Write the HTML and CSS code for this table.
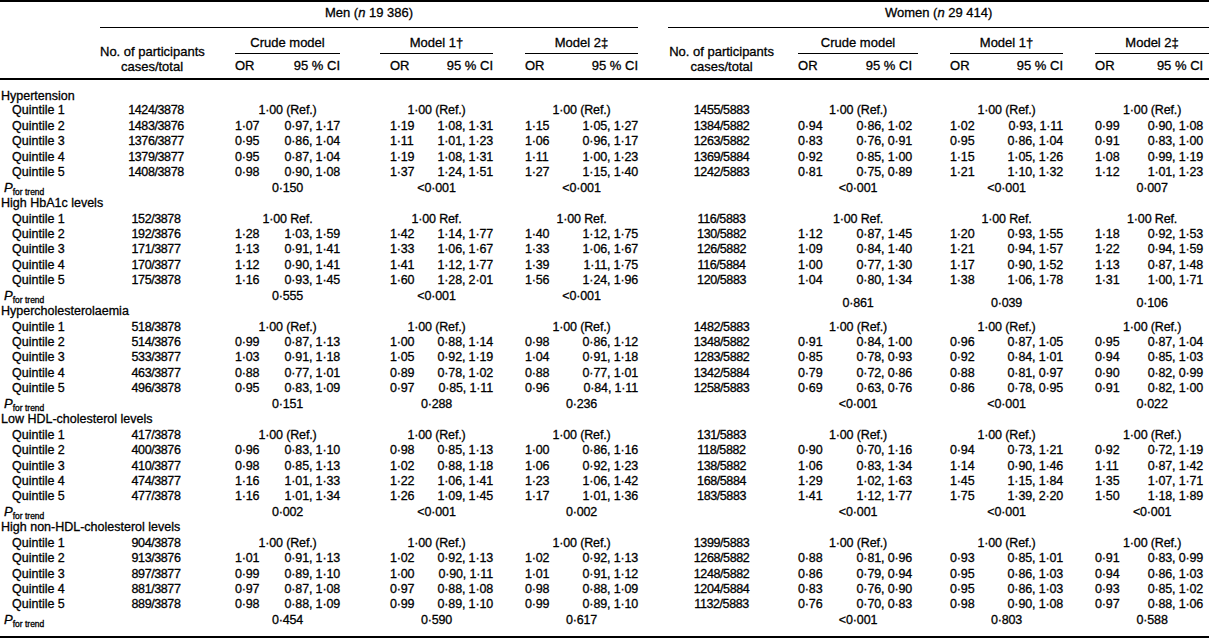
FILE: index.html
```html
<!DOCTYPE html>
<html lang="en">
<head>
<meta charset="utf-8">
<title>Table</title>
<link rel="stylesheet" href="styles.css">
</head>
<body>
<div class="wrap">
<table class="tbl">
<colgroup>
<col class="w100"><col class="w112"><col class="w23"><col class="w40"><col class="w65"><col class="w40"><col class="w40"><col class="w73"><col class="w32"><col class="w40"><col class="w73"><col class="w30"><col class="w107"><col class="w23"><col class="w40"><col class="w80"><col class="w32"><col class="w40"><col class="w73"><col class="w32"><col class="w40"><col class="w74">
</colgroup>
<thead>
<tr class="r1">
<th rowspan="3"></th>
<th class="grp" colspan="10">Men (<i>n</i> 19 386)</th>
<th></th>
<th class="grp" colspan="10">Women (<i>n</i> 29 414)</th>
</tr>
<tr class="r2">
<th class="part part-m" rowspan="2">No. of participants<br>cases/total</th>
<th rowspan="2"></th>
<th class="grp" colspan="2">Crude model</th>
<th></th>
<th class="grp" colspan="2">Model 1†</th>
<th></th>
<th class="grp" colspan="2">Model 2‡</th>
<th></th>
<th class="part" rowspan="2">No. of participants<br>cases/total</th>
<th rowspan="2"></th>
<th class="grp" colspan="2">Crude model</th>
<th></th>
<th class="grp" colspan="2">Model 1†</th>
<th></th>
<th class="grp" colspan="2">Model 2‡</th>
</tr>
<tr class="r3">
<th class="or">OR</th><th class="ci">95 % CI</th><th></th>
<th class="or">OR</th><th class="ci">95 % CI</th><th></th>
<th class="or">OR</th><th class="ci">95 % CI</th><th></th>
<th class="or">OR</th><th class="ci">95 % CI</th><th></th>
<th class="or">OR</th><th class="ci">95 % CI</th><th></th>
<th class="or">OR</th><th class="ci">95 % CI</th>
</tr>
</thead>
<tbody>
<tr class="sec first"><td colspan="22">Hypertension</td></tr>
<tr><td class="q">Quintile 1</td><td class="n">1424/3878</td><td></td><td class="c" colspan="2">1·00 (Ref.)</td><td></td><td class="c" colspan="2">1·00 (Ref.)</td><td></td><td class="c" colspan="2">1·00 (Ref.)</td><td></td><td class="n">1455/5883</td><td></td><td class="c" colspan="2">1·00 (Ref.)</td><td></td><td class="c" colspan="2">1·00 (Ref.)</td><td></td><td class="c" colspan="2">1·00 (Ref.)</td></tr>
<tr><td class="q">Quintile 2</td><td class="n">1483/3876</td><td></td><td class="or">1·07</td><td class="ci">0·97, 1·17</td><td></td><td class="or">1·19</td><td class="ci">1·08, 1·31</td><td></td><td class="or">1·15</td><td class="ci">1·05, 1·27</td><td></td><td class="n">1384/5882</td><td></td><td class="or">0·94</td><td class="ci">0·86, 1·02</td><td></td><td class="or">1·02</td><td class="ci">0·93, 1·11</td><td></td><td class="or">0·99</td><td class="ci">0·90, 1·08</td></tr>
<tr><td class="q">Quintile 3</td><td class="n">1376/3877</td><td></td><td class="or">0·95</td><td class="ci">0·86, 1·04</td><td></td><td class="or">1·11</td><td class="ci">1·01, 1·23</td><td></td><td class="or">1·06</td><td class="ci">0·96, 1·17</td><td></td><td class="n">1263/5882</td><td></td><td class="or">0·83</td><td class="ci">0·76, 0·91</td><td></td><td class="or">0·95</td><td class="ci">0·86, 1·04</td><td></td><td class="or">0·91</td><td class="ci">0·83, 1·00</td></tr>
<tr><td class="q">Quintile 4</td><td class="n">1379/3877</td><td></td><td class="or">0·95</td><td class="ci">0·87, 1·04</td><td></td><td class="or">1·19</td><td class="ci">1·08, 1·31</td><td></td><td class="or">1·11</td><td class="ci">1·00, 1·23</td><td></td><td class="n">1369/5884</td><td></td><td class="or">0·92</td><td class="ci">0·85, 1·00</td><td></td><td class="or">1·15</td><td class="ci">1·05, 1·26</td><td></td><td class="or">1·08</td><td class="ci">0·99, 1·19</td></tr>
<tr><td class="q">Quintile 5</td><td class="n">1408/3878</td><td></td><td class="or">0·98</td><td class="ci">0·90, 1·08</td><td></td><td class="or">1·37</td><td class="ci">1·24, 1·51</td><td></td><td class="or">1·27</td><td class="ci">1·15, 1·40</td><td></td><td class="n">1242/5883</td><td></td><td class="or">0·81</td><td class="ci">0·75, 0·89</td><td></td><td class="or">1·21</td><td class="ci">1·10, 1·32</td><td></td><td class="or">1·12</td><td class="ci">1·01, 1·23</td></tr>
<tr><td class="p"><i>P</i><sub>for trend</sub></td><td></td><td></td><td class="c" colspan="2">0·150</td><td></td><td class="c" colspan="2">&lt;0·001</td><td></td><td class="c" colspan="2">&lt;0·001</td><td></td><td></td><td></td><td class="c" colspan="2">&lt;0·001</td><td></td><td class="c" colspan="2">&lt;0·001</td><td></td><td class="c" colspan="2">0·007</td></tr>

<tr class="sec"><td colspan="22">High HbA1c levels</td></tr>
<tr><td class="q">Quintile 1</td><td class="n">152/3878</td><td></td><td class="c" colspan="2">1·00 Ref.</td><td></td><td class="c" colspan="2">1·00 Ref.</td><td></td><td class="c" colspan="2">1·00 Ref.</td><td></td><td class="n">116/5883</td><td></td><td class="c" colspan="2">1·00 Ref.</td><td></td><td class="c" colspan="2">1·00 Ref.</td><td></td><td class="c" colspan="2">1·00 Ref.</td></tr>
<tr><td class="q">Quintile 2</td><td class="n">192/3876</td><td></td><td class="or">1·28</td><td class="ci">1·03, 1·59</td><td></td><td class="or">1·42</td><td class="ci">1·14, 1·77</td><td></td><td class="or">1·40</td><td class="ci">1·12, 1·75</td><td></td><td class="n">130/5882</td><td></td><td class="or">1·12</td><td class="ci">0·87, 1·45</td><td></td><td class="or">1·20</td><td class="ci">0·93, 1·55</td><td></td><td class="or">1·18</td><td class="ci">0·92, 1·53</td></tr>
<tr><td class="q">Quintile 3</td><td class="n">171/3877</td><td></td><td class="or">1·13</td><td class="ci">0·91, 1·41</td><td></td><td class="or">1·33</td><td class="ci">1·06, 1·67</td><td></td><td class="or">1·33</td><td class="ci">1·06, 1·67</td><td></td><td class="n">126/5882</td><td></td><td class="or">1·09</td><td class="ci">0·84, 1·40</td><td></td><td class="or">1·21</td><td class="ci">0·94, 1·57</td><td></td><td class="or">1·22</td><td class="ci">0·94, 1·59</td></tr>
<tr><td class="q">Quintile 4</td><td class="n">170/3877</td><td></td><td class="or">1·12</td><td class="ci">0·90, 1·41</td><td></td><td class="or">1·41</td><td class="ci">1·12, 1·77</td><td></td><td class="or">1·39</td><td class="ci">1·11, 1·75</td><td></td><td class="n">116/5884</td><td></td><td class="or">1·00</td><td class="ci">0·77, 1·30</td><td></td><td class="or">1·17</td><td class="ci">0·90, 1·52</td><td></td><td class="or">1·13</td><td class="ci">0·87, 1·48</td></tr>
<tr><td class="q">Quintile 5</td><td class="n">175/3878</td><td></td><td class="or">1·16</td><td class="ci">0·93, 1·45</td><td></td><td class="or">1·60</td><td class="ci">1·28, 2·01</td><td></td><td class="or">1·56</td><td class="ci">1·24, 1·96</td><td></td><td class="n">120/5883</td><td></td><td class="or">1·04</td><td class="ci">0·80, 1·34</td><td></td><td class="or">1·38</td><td class="ci">1·06, 1·78</td><td></td><td class="or">1·31</td><td class="ci">1·00, 1·71</td></tr>
<tr><td class="p"><i>P</i><sub>for trend</sub></td><td></td><td></td><td class="c" colspan="2">0·555</td><td></td><td class="c" colspan="2">&lt;0·001</td><td></td><td class="c" colspan="2">&lt;0·001</td><td></td><td></td><td></td><td class="c" colspan="2"><span class="low">0·861</span></td><td></td><td class="c" colspan="2"><span class="low">0·039</span></td><td></td><td class="c" colspan="2"><span class="low">0·106</span></td></tr>

<tr class="sec"><td colspan="22">Hypercholesterolaemia</td></tr>
<tr><td class="q">Quintile 1</td><td class="n">518/3878</td><td></td><td class="c" colspan="2">1·00 (Ref.)</td><td></td><td class="c" colspan="2">1·00 (Ref.)</td><td></td><td class="c" colspan="2">1·00 (Ref.)</td><td></td><td class="n">1482/5883</td><td></td><td class="c" colspan="2">1·00 (Ref.)</td><td></td><td class="c" colspan="2">1·00 (Ref.)</td><td></td><td class="c" colspan="2">1·00 (Ref.)</td></tr>
<tr><td class="q">Quintile 2</td><td class="n">514/3876</td><td></td><td class="or">0·99</td><td class="ci">0·87, 1·13</td><td></td><td class="or">1·00</td><td class="ci">0·88, 1·14</td><td></td><td class="or">0·98</td><td class="ci">0·86, 1·12</td><td></td><td class="n">1348/5882</td><td></td><td class="or">0·91</td><td class="ci">0·84, 1·00</td><td></td><td class="or">0·96</td><td class="ci">0·87, 1·05</td><td></td><td class="or">0·95</td><td class="ci">0·87, 1·04</td></tr>
<tr><td class="q">Quintile 3</td><td class="n">533/3877</td><td></td><td class="or">1·03</td><td class="ci">0·91, 1·18</td><td></td><td class="or">1·05</td><td class="ci">0·92, 1·19</td><td></td><td class="or">1·04</td><td class="ci">0·91, 1·18</td><td></td><td class="n">1283/5882</td><td></td><td class="or">0·85</td><td class="ci">0·78, 0·93</td><td></td><td class="or">0·92</td><td class="ci">0·84, 1·01</td><td></td><td class="or">0·94</td><td class="ci">0·85, 1·03</td></tr>
<tr><td class="q">Quintile 4</td><td class="n">463/3877</td><td></td><td class="or">0·88</td><td class="ci">0·77, 1·01</td><td></td><td class="or">0·89</td><td class="ci">0·78, 1·02</td><td></td><td class="or">0·88</td><td class="ci">0·77, 1·01</td><td></td><td class="n">1342/5884</td><td></td><td class="or">0·79</td><td class="ci">0·72, 0·86</td><td></td><td class="or">0·88</td><td class="ci">0·81, 0·97</td><td></td><td class="or">0·90</td><td class="ci">0·82, 0·99</td></tr>
<tr><td class="q">Quintile 5</td><td class="n">496/3878</td><td></td><td class="or">0·95</td><td class="ci">0·83, 1·09</td><td></td><td class="or">0·97</td><td class="ci">0·85, 1·11</td><td></td><td class="or">0·96</td><td class="ci">0·84, 1·11</td><td></td><td class="n">1258/5883</td><td></td><td class="or">0·69</td><td class="ci">0·63, 0·76</td><td></td><td class="or">0·86</td><td class="ci">0·78, 0·95</td><td></td><td class="or">0·91</td><td class="ci">0·82, 1·00</td></tr>
<tr><td class="p"><i>P</i><sub>for trend</sub></td><td></td><td></td><td class="c" colspan="2">0·151</td><td></td><td class="c" colspan="2">0·288</td><td></td><td class="c" colspan="2">0·236</td><td></td><td></td><td></td><td class="c" colspan="2">&lt;0·001</td><td></td><td class="c" colspan="2">&lt;0·001</td><td></td><td class="c" colspan="2">0·022</td></tr>

<tr class="sec"><td colspan="22">Low HDL-cholesterol levels</td></tr>
<tr><td class="q">Quintile 1</td><td class="n">417/3878</td><td></td><td class="c" colspan="2">1·00 (Ref.)</td><td></td><td class="c" colspan="2">1·00 (Ref.)</td><td></td><td class="c" colspan="2">1·00 (Ref.)</td><td></td><td class="n">131/5883</td><td></td><td class="c" colspan="2">1·00 (Ref.)</td><td></td><td class="c" colspan="2">1·00 (Ref.)</td><td></td><td class="c" colspan="2">1·00 (Ref.)</td></tr>
<tr><td class="q">Quintile 2</td><td class="n">400/3876</td><td></td><td class="or">0·96</td><td class="ci">0·83, 1·10</td><td></td><td class="or">0·98</td><td class="ci">0·85, 1·13</td><td></td><td class="or">1·00</td><td class="ci">0·86, 1·16</td><td></td><td class="n">118/5882</td><td></td><td class="or">0·90</td><td class="ci">0·70, 1·16</td><td></td><td class="or">0·94</td><td class="ci">0·73, 1·21</td><td></td><td class="or">0·92</td><td class="ci">0·72, 1·19</td></tr>
<tr><td class="q">Quintile 3</td><td class="n">410/3877</td><td></td><td class="or">0·98</td><td class="ci">0·85, 1·13</td><td></td><td class="or">1·02</td><td class="ci">0·88, 1·18</td><td></td><td class="or">1·06</td><td class="ci">0·92, 1·23</td><td></td><td class="n">138/5882</td><td></td><td class="or">1·06</td><td class="ci">0·83, 1·34</td><td></td><td class="or">1·14</td><td class="ci">0·90, 1·46</td><td></td><td class="or">1·11</td><td class="ci">0·87, 1·42</td></tr>
<tr><td class="q">Quintile 4</td><td class="n">474/3877</td><td></td><td class="or">1·16</td><td class="ci">1·01, 1·33</td><td></td><td class="or">1·22</td><td class="ci">1·06, 1·41</td><td></td><td class="or">1·23</td><td class="ci">1·06, 1·42</td><td></td><td class="n">168/5884</td><td></td><td class="or">1·29</td><td class="ci">1·02, 1·63</td><td></td><td class="or">1·45</td><td class="ci">1·15, 1·84</td><td></td><td class="or">1·35</td><td class="ci">1·07, 1·71</td></tr>
<tr><td class="q">Quintile 5</td><td class="n">477/3878</td><td></td><td class="or">1·16</td><td class="ci">1·01, 1·34</td><td></td><td class="or">1·26</td><td class="ci">1·09, 1·45</td><td></td><td class="or">1·17</td><td class="ci">1·01, 1·36</td><td></td><td class="n">183/5883</td><td></td><td class="or">1·41</td><td class="ci">1·12, 1·77</td><td></td><td class="or">1·75</td><td class="ci">1·39, 2·20</td><td></td><td class="or">1·50</td><td class="ci">1·18, 1·89</td></tr>
<tr><td class="p"><i>P</i><sub>for trend</sub></td><td></td><td></td><td class="c" colspan="2">0·002</td><td></td><td class="c" colspan="2">&lt;0·001</td><td></td><td class="c" colspan="2">0·002</td><td></td><td></td><td></td><td class="c" colspan="2">&lt;0·001</td><td></td><td class="c" colspan="2">&lt;0·001</td><td></td><td class="c" colspan="2">&lt;0·001</td></tr>

<tr class="sec"><td colspan="22">High non-HDL-cholesterol levels</td></tr>
<tr><td class="q">Quintile 1</td><td class="n">904/3878</td><td></td><td class="c" colspan="2">1·00 (Ref.)</td><td></td><td class="c" colspan="2">1·00 (Ref.)</td><td></td><td class="c" colspan="2">1·00 (Ref.)</td><td></td><td class="n">1399/5883</td><td></td><td class="c" colspan="2">1·00 (Ref.)</td><td></td><td class="c" colspan="2">1·00 (Ref.)</td><td></td><td class="c" colspan="2">1·00 (Ref.)</td></tr>
<tr><td class="q">Quintile 2</td><td class="n">913/3876</td><td></td><td class="or">1·01</td><td class="ci">0·91, 1·13</td><td></td><td class="or">1·02</td><td class="ci">0·92, 1·13</td><td></td><td class="or">1·02</td><td class="ci">0·92, 1·13</td><td></td><td class="n">1268/5882</td><td></td><td class="or">0·88</td><td class="ci">0·81, 0·96</td><td></td><td class="or">0·93</td><td class="ci">0·85, 1·01</td><td></td><td class="or">0·91</td><td class="ci">0·83, 0·99</td></tr>
<tr><td class="q">Quintile 3</td><td class="n">897/3877</td><td></td><td class="or">0·99</td><td class="ci">0·89, 1·10</td><td></td><td class="or">1·00</td><td class="ci">0·90, 1·11</td><td></td><td class="or">1·01</td><td class="ci">0·91, 1·12</td><td></td><td class="n">1248/5882</td><td></td><td class="or">0·86</td><td class="ci">0·79, 0·94</td><td></td><td class="or">0·95</td><td class="ci">0·86, 1·03</td><td></td><td class="or">0·94</td><td class="ci">0·86, 1·03</td></tr>
<tr><td class="q">Quintile 4</td><td class="n">881/3877</td><td></td><td class="or">0·97</td><td class="ci">0·87, 1·08</td><td></td><td class="or">0·97</td><td class="ci">0·88, 1·08</td><td></td><td class="or">0·98</td><td class="ci">0·88, 1·09</td><td></td><td class="n">1204/5884</td><td></td><td class="or">0·83</td><td class="ci">0·76, 0·90</td><td></td><td class="or">0·95</td><td class="ci">0·86, 1·03</td><td></td><td class="or">0·93</td><td class="ci">0·85, 1·02</td></tr>
<tr><td class="q">Quintile 5</td><td class="n">889/3878</td><td></td><td class="or">0·98</td><td class="ci">0·88, 1·09</td><td></td><td class="or">0·99</td><td class="ci">0·89, 1·10</td><td></td><td class="or">0·99</td><td class="ci">0·89, 1·10</td><td></td><td class="n">1132/5883</td><td></td><td class="or">0·76</td><td class="ci">0·70, 0·83</td><td></td><td class="or">0·98</td><td class="ci">0·90, 1·08</td><td></td><td class="or">0·97</td><td class="ci">0·88, 1·06</td></tr>
<tr class="last"><td class="p"><i>P</i><sub>for trend</sub></td><td></td><td></td><td class="c" colspan="2">0·454</td><td></td><td class="c" colspan="2">0·590</td><td></td><td class="c" colspan="2">0·617</td><td></td><td></td><td></td><td class="c" colspan="2">&lt;0·001</td><td></td><td class="c" colspan="2">0·803</td><td></td><td class="c" colspan="2">0·588</td></tr>
</tbody>
</table>
</div>
</body>
</html>
```

FILE: styles.css
```css
html, body {
  margin: 0;
  padding: 0;
  background: #fff;
}
body {
  font-family: "Liberation Sans", Arial, Helvetica, sans-serif;
  font-size: 12.5px;
  color: #000;
  -webkit-text-stroke: 0.3px #000;
}
.wrap {
  width: 1209px;
  border-top: 2px solid #000;
  border-bottom: 2px solid #000;
}
.tbl {
  width: 1209px;
  table-layout: fixed;
  border-collapse: collapse;
}
.tbl th, .tbl td {
  padding: 0;
  font-weight: normal;
  white-space: nowrap;
  overflow: visible;
}
.w100 { width: 100px; }
.w112 { width: 112px; }
.w107 { width: 107px; }
.w80 { width: 80px; }
.w74 { width: 74px; }
.w73 { width: 73px; }
.w65 { width: 65px; }
.w40 { width: 40px; }
.w32 { width: 32px; }
.w30 { width: 30px; }
.w23 { width: 23px; }

thead {
  border-bottom: 2px solid #000;
  font-size: 13px;
}
.r1 th {
  height: 22px;
  line-height: 15px;
  vertical-align: top;
  padding-top: 3px;
}
.r1 th.grp {
  height: 19px;
}
.r2 th {
  height: 22px;
  line-height: 15px;
  vertical-align: bottom;
  padding-bottom: 3px;
}
.r3 th {
  height: 24px;
  line-height: 15px;
  vertical-align: middle;
}
.grp {
  text-align: center;
  border-bottom: 1px solid #000;
}
th.part {
  text-align: center;
  vertical-align: bottom;
  padding-bottom: 4px;
}
th.part-m {
  padding-right: 8px;
}
.or { text-align: left; }
.ci { text-align: right; }
.c { text-align: center; }
.n { text-align: center; letter-spacing: -0.4px; }

/* Men, model 1: OR figures sit slightly in from the rule */
.r3 th.or:nth-child(4),
tbody td.or:nth-child(7) {
  padding-left: 10px;
}
/* Women, crude model: CI column ends before the rule */
.r3 th.ci:nth-child(11),
tbody td.ci:nth-child(16) {
  padding-right: 6px;
}

tbody {
  letter-spacing: -0.15px;
}
tbody tr {
  height: 15.45px;
}
tbody td {
  line-height: 13px;
  vertical-align: middle;
}
tbody tr.first {
  height: 24.75px;
}
tbody tr.first td {
  padding-top: 9.3px;
}
tbody tr.last {
  height: 23.45px;
}
tbody tr.last td {
  padding-bottom: 8px;
}
.sec td {
  padding-left: 1px;
  letter-spacing: 0;
}
.q {
  padding-left: 12px !important;
  letter-spacing: 0;
}
.p {
  padding-left: 4px !important;
  letter-spacing: 0;
}
.p i {
  font-size: 13px;
}
.p sub {
  font-size: 8.5px;
  vertical-align: -3px;
  line-height: 0;
}
.low {
  display: block;
  margin-top: 7px;
  margin-bottom: -7px;
}
tr td:last-child.ci,
tr th:last-child.ci {
  padding-right: 6px;
}
```
